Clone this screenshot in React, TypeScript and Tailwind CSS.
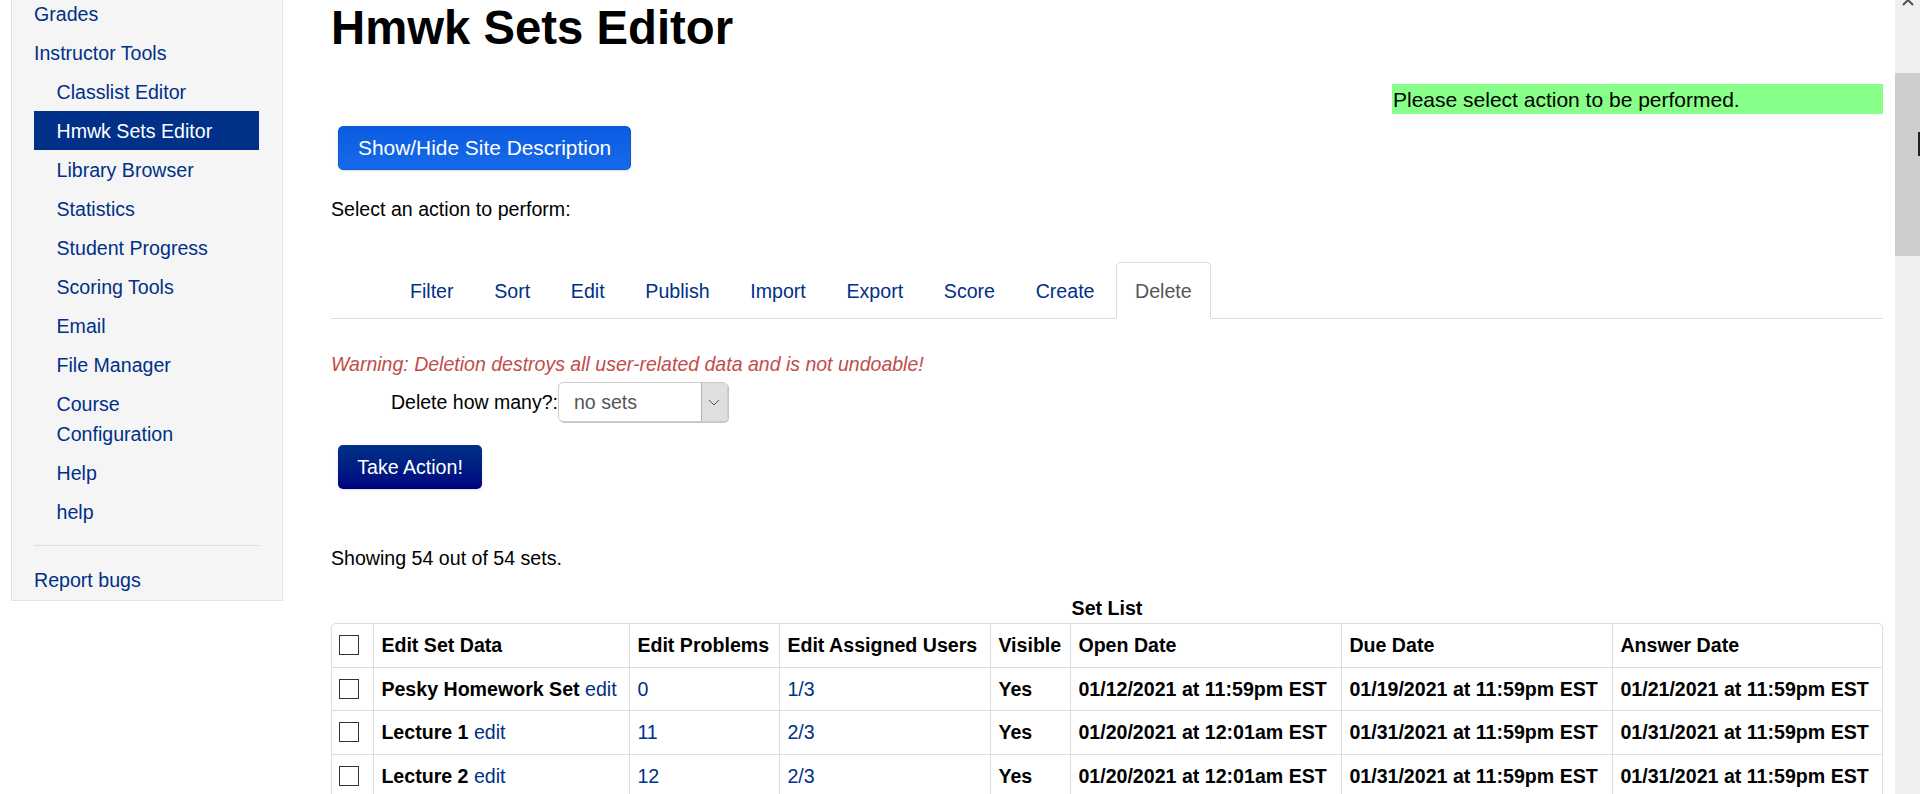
import React from "react";

const L = "text-[#003087]";
const nav: [string, boolean?, boolean?][] = [
  ["Grades"],
  ["Instructor Tools"],
  ["Classlist Editor", true],
  ["Hmwk Sets Editor", true, true],
  ["Library Browser", true],
  ["Statistics", true],
  ["Student Progress", true],
  ["Scoring Tools", true],
  ["Email", true],
  ["File Manager", true],
  ["Course Configuration", true],
  ["Help", true],
  ["help", true],
];
const tabs = ["Filter", "Sort", "Edit", "Publish", "Import", "Export", "Score", "Create"];
const rows = [
  ["Pesky Homework Set", "0", "1/3", "01/12/2021 at 11:59pm EST", "01/19/2021 at 11:59pm EST", "01/21/2021 at 11:59pm EST"],
  ["Lecture 1", "11", "2/3", "01/20/2021 at 12:01am EST", "01/31/2021 at 11:59pm EST", "01/31/2021 at 11:59pm EST"],
  ["Lecture 2", "12", "2/3", "01/20/2021 at 12:01am EST", "01/31/2021 at 11:59pm EST", "01/31/2021 at 11:59pm EST"],
];
const cell = "border-r border-b border-[#dddddd] px-[7.4px] py-0 align-middle text-left";
const head = `${cell} border-t`;
const Box = () => <span className="block w-5 h-5 border border-[#333333] bg-white" />;

export default function App() {
  return (
    <div className="flex h-[794px] overflow-hidden bg-white text-black text-[19.6px] leading-[30px] font-['Liberation_Sans',Arial,sans-serif]">
      <aside className="ml-[11px] w-[272px] h-[621px] -mt-5 shrink-0 bg-[#f5f5f5] border border-[#e3e3e3] pl-[22px] pr-[23px] flex flex-col">
        <div className="pt-[13px]">
          {nav.map(([t, sub, active]) => (
            <div
              key={t}
              className={`py-[4.5px] pr-[25px] ${sub ? "pl-[22.5px]" : ""} ${active ? "bg-[#003087] text-white" : L}`}
            >
              {t}
            </div>
          ))}
        </div>
        <div className="mt-[14px] h-px bg-[#dddddd]" />
        <div className={`pt-[19px] ${L}`}>Report bugs</div>
      </aside>
      <main className="ml-[48px] w-[1552px] shrink-0">
        <h1 className="text-[47.3px] leading-[56px] font-bold">Hmwk Sets Editor</h1>
        <div className="mt-[28px] ml-[1061px] h-[30px] bg-[#88ff88] pl-px text-[21px] leading-[32px]">Please select action to be performed.</div>
        <button className="block mt-[12px] ml-[7px] h-11 px-[19px] rounded-[5px] bg-gradient-to-b from-[#0b5ce2] to-[#176ae8] border border-[#0f58cf] text-white text-[20.9px] shadow-sm">
          Show/Hide Site Description
        </button>
        <p className="mt-[24px]">Select an action to perform:</p>
        <div className="mt-[26px] border-b border-[#dddddd] pl-[60px] flex h-[69px] items-end">
          {tabs.map((t) => (
            <span key={t} className={`px-[19px] mr-[2.7px] pb-[12px] ${L}`}>{t}</span>
          ))}
          <span className="-ml-[0.7px] px-[18.5px] h-[57px] -mb-px pt-[13px] bg-white border border-[#dddddd] border-b-white rounded-t-[5px] text-[#555555]">Delete</span>
        </div>
        <p className="mt-[30px] italic text-[19.52px] text-[#c14c4a]">Warning: Deletion destroys all user-related data and is not undoable!</p>
        <div className="mt-[3px] flex items-center h-10 pl-[60px]">
          <span className="text-[19.5px]">Delete how many?:</span>
          <div className="w-[170px] h-10 flex border border-[#cccccc] rounded-[5px] overflow-hidden shadow-[1px_1px_0_#c4c4c4]">
            <span className="flex-1 pl-[15px] text-[#555555] flex items-center">no sets</span>
            <span className="w-[26px] bg-[#dfdfdf] border-l border-[#b5b5b5] flex items-center justify-center">
              <svg width="12" height="7" viewBox="0 0 12 7" fill="none" stroke="#555555" strokeWidth="1"><path d="M1 1l5 5 5-5" /></svg>
            </span>
          </div>
        </div>
        <button className="block mt-[23px] ml-[7px] h-11 px-[19.2px] rounded-[5px] bg-gradient-to-b from-[#003087] to-[#000080] text-white shadow-sm">
          Take Action!
        </button>
        <p className="mt-[54px]">Showing 54 out of 54 sets.</p>
        <div className="mt-[20px] text-center font-bold h-[29px]">Set List</div>
        <table className="mt-[1px] w-[1552px] table-fixed border-separate border-spacing-0">
          <colgroup>
            <col className="w-[43px]" />
            <col className="w-[256px]" />
            <col className="w-[150px]" />
            <col className="w-[211px]" />
            <col className="w-[80px]" />
            <col className="w-[271px]" />
            <col className="w-[271px]" />
            <col className="w-[270px]" />
          </colgroup>
          <thead>
            <tr className="h-[44.5px] font-bold">
              <th className={`${head} border-l rounded-tl-[5px] !pl-[7px]`}><Box /></th>
              <th className={head}>Edit Set Data</th>
              <th className={head}>Edit Problems</th>
              <th className={head}>Edit Assigned Users</th>
              <th className={head}>Visible</th>
              <th className={head}>Open Date</th>
              <th className={head}>Due Date</th>
              <th className={`${head} rounded-tr-[5px]`}>Answer Date</th>
            </tr>
          </thead>
          <tbody>
            {rows.map((r) => (
              <tr key={r[0]} className="h-[43.5px]">
                <td className={`${cell} border-l !pl-[7px]`}><Box /></td>
                <td className={cell}><b>{r[0]}</b> <span className={L}>edit</span></td>
                <td className={`${cell} ${L}`}>{r[1]}</td>
                <td className={`${cell} ${L}`}>{r[2]}</td>
                <td className={`${cell} font-bold`}>Yes</td>
                <td className={`${cell} font-bold`}>{r[3]}</td>
                <td className={`${cell} font-bold`}>{r[4]}</td>
                <td className={`${cell} font-bold`}>{r[5]}</td>
              </tr>
            ))}
          </tbody>
        </table>
      </main>
      <div className="ml-auto w-[25px] shrink-0 bg-[#f0f0f0] flex flex-col relative">
        <svg className="mx-auto -mt-[3px]" width="14" height="10" viewBox="0 0 14 10" fill="none" stroke="#505050" strokeWidth="2"><path d="M2 8l5-5 5 5" /></svg>
        <div className="mt-[66px] h-[183px] bg-[#cdcdcd]" />
        <div className="absolute right-0 top-[132px] w-[2px] h-6 bg-[#222222]" />
      </div>
    </div>
  );
}
